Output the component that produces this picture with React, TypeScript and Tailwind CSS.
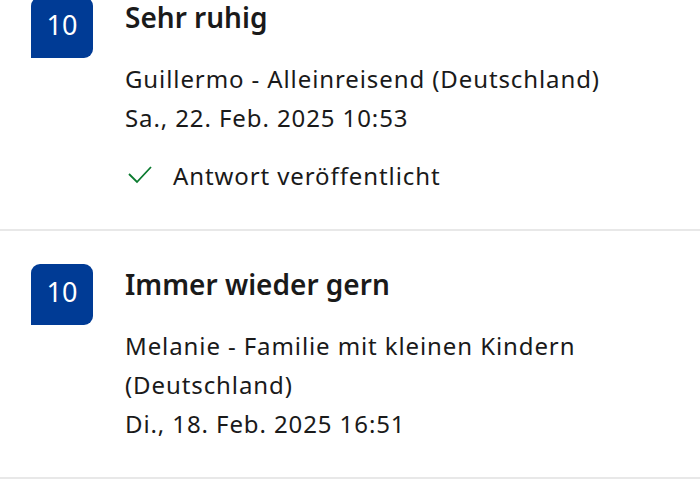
import React from "react";

const font = { fontFamily: '"Noto Sans", "Open Sans", sans-serif' };

function Badge() {
  return (
    <div className="w-[62px] h-[61px] shrink-0 bg-[#003b95] rounded-tl-[9px] rounded-tr-[9px] rounded-br-[9px] flex items-center justify-center">
      <span className="text-white text-[27px] leading-none -mt-[6px]">10</span>
    </div>
  );
}

function Card({
  title,
  lines,
  answered,
}: {
  title: string;
  lines: string[];
  answered?: boolean;
}) {
  return (
    <div>
      <div className="flex pl-[31px] pt-[33px] pb-[34px]">
        <Badge />
        <div className="ml-[32px] pt-[4px]">
          <div className="text-[28px] leading-[32px] font-semibold text-[#1a1a1a]">{title}</div>
          <div className="mt-[26px] text-[24px] leading-[39px] tracking-[0.9px] text-[#1a1a1a] w-[540px]">
            {lines.map((l) => (
              <div key={l}>{l}</div>
            ))}
          </div>
          {answered && (
            <div className="mt-[19px] flex items-center text-[24px] leading-[39px] tracking-[0.9px] text-[#1a1a1a]">
              <svg width="26" height="22" viewBox="0 0 26 22" className="ml-[2px] mr-[20px] -mt-[2px]">
                <polyline points="2,10 10,18 24,3" fill="none" stroke="#0a7a2f" strokeWidth="1.8" />
              </svg>
              <span>Antwort veröffentlicht</span>
            </div>
          )}
        </div>
      </div>
      <div className="h-[2px] bg-[#e8e8e8]" />
    </div>
  );
}

export default function App() {
  return (
    <div className="w-[700px] h-[500px] overflow-hidden bg-white" style={font}>
      <div className="-mt-[36px]">
        <Card
          title="Sehr ruhig"
          lines={["Guillermo - Alleinreisend (Deutschland)", "Sa., 22. Feb. 2025 10:53"]}
          answered
        />
        <Card
          title="Immer wieder gern"
          lines={["Melanie - Familie mit kleinen Kindern", "(Deutschland)", "Di., 18. Feb. 2025 16:51"]}
        />
      </div>
    </div>
  );
}
